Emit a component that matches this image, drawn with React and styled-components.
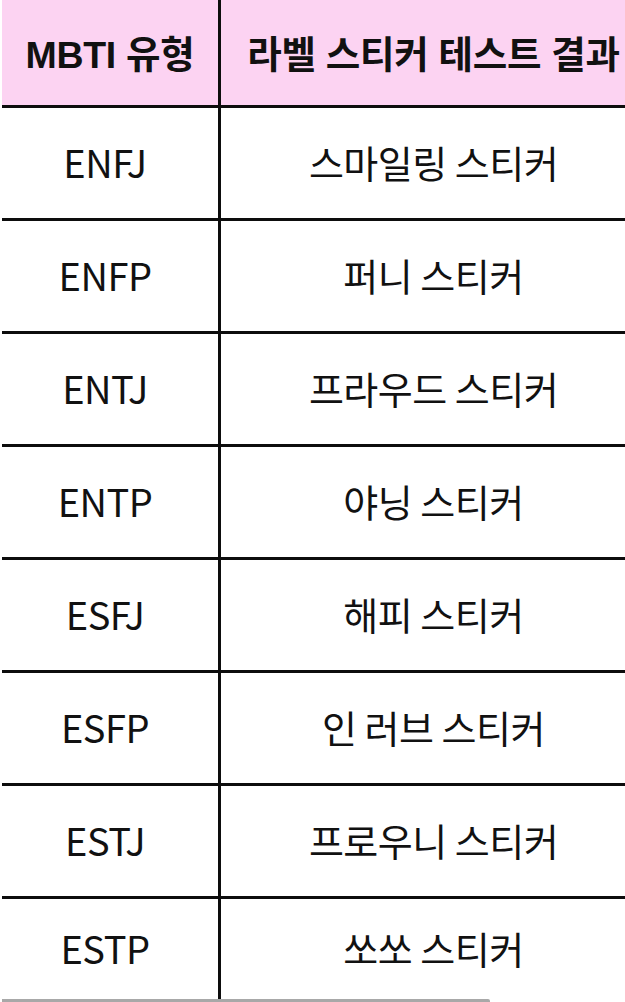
import React from "react";
import styled, { createGlobalStyle } from "styled-components";

const rows = [
  ["ENFJ", "스마일링 스티커"],
  ["ENFP", "퍼니 스티커"],
  ["ENTJ", "프라우드 스티커"],
  ["ENTP", "야닝 스티커"],
  ["ESFJ", "해피 스티커"],
  ["ESFP", "인 러브 스티커"],
  ["ESTJ", "프로우니 스티커"],
  ["ESTP", "쏘쏘 스티커"],
];

const GlobalStyle = createGlobalStyle`
  html, body {
    margin: 0;
    padding: 0;
    background: #ffffff;
    overflow: hidden;
  }
  body {
    font-family: "Noto Sans CJK KR", "Noto Sans", sans-serif;
    color: #111;
  }
`;

const Page = styled.div`
  width: 625px;
  height: 1002px;
  overflow: hidden;
  padding-left: 2px;
  box-sizing: border-box;
`;

const Table = styled.div`
  display: grid;
  grid-template-columns: 219px 1fr;
  width: 640px;
`;

const Cell = styled.div`
  display: flex;
  align-items: center;
  justify-content: center;
  box-sizing: border-box;
  height: ${(p) => p.$h}px;
  border-bottom: ${(p) => (p.$last ? "none" : "3px solid #0d0d0d")};
  border-right: ${(p) => (p.$left ? "3px solid #0d0d0d" : "none")};
  background: #ffffff;
  font-size: 38px;
  font-weight: 400;
  letter-spacing: -0.5px;
  padding-left: ${(p) => (p.$left ? "0" : "4px")};
  padding-right: ${(p) => (p.$left ? "10px" : "0")};
  padding-bottom: 4px;
  white-space: nowrap;
`;

const HeadCell = styled(Cell)`
  background: #fcd3f2;
  font-family: "Liberation Sans", "Noto Sans CJK KR", sans-serif;
  font-size: 37.5px;
  font-weight: 700;
  letter-spacing: -0.3px;
  padding-right: 0;
  padding-bottom: 2px;
`;

const Shadow = styled.div`
  height: 6px;
  width: 488px;
  background: #a8a8a8;
  border-radius: 0 2px 0 0;
`;

export default function App() {
  return (
    <Page>
      <GlobalStyle />
      <Table>
        <HeadCell $left $h={108}>MBTI 유형</HeadCell>
        <HeadCell $h={108}>라벨 스티커 테스트 결과</HeadCell>
        {rows.map(([type, sticker], i) => {
          const last = i === rows.length - 1;
          const h = last ? 100 : 113;
          return (
            <React.Fragment key={type}>
              <Cell $left $last={last} $h={h}>{type}</Cell>
              <Cell $last={last} $h={h}>{sticker}</Cell>
            </React.Fragment>
          );
        })}
      </Table>
      <Shadow />
    </Page>
  );
}
